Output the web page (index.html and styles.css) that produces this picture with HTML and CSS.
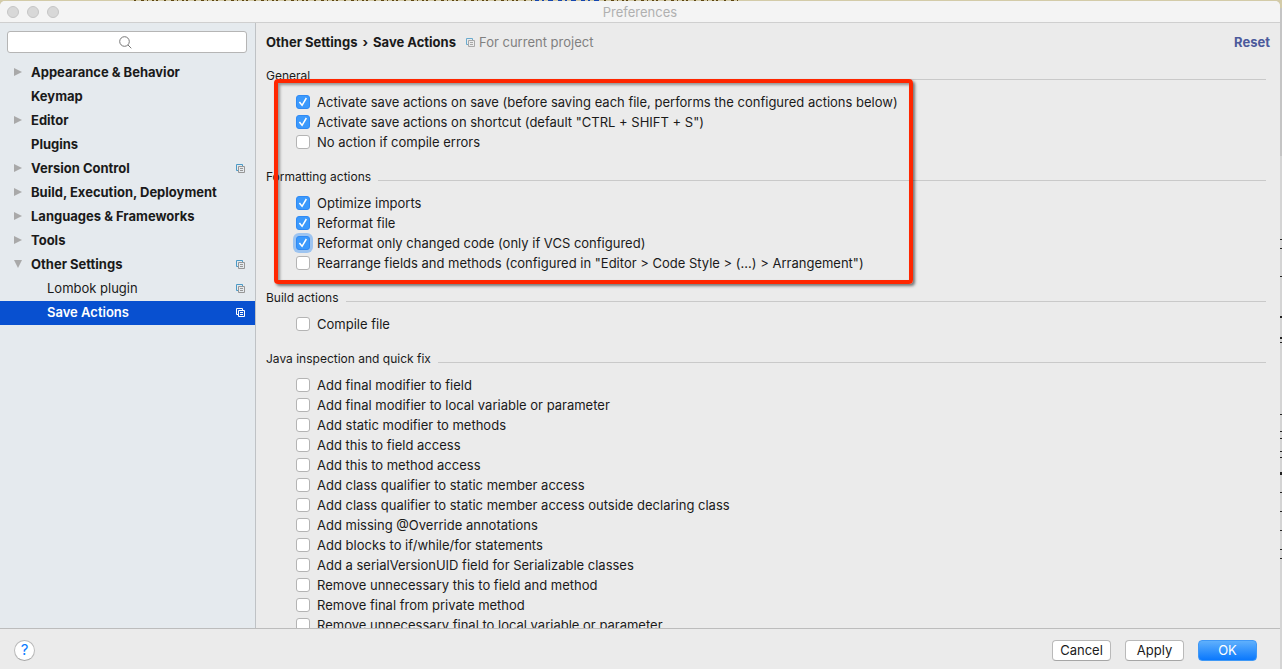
FILE: index.html
```html
<!DOCTYPE html>
<html lang="en">
<head>
<meta charset="utf-8">
<title>Preferences</title>
<link rel="stylesheet" href="styles.css">
</head>
<body>
<svg class="defs" aria-hidden="true">
  <symbol id="copy" viewBox="0 0 9 9">
    <path class="copy-back" d="M2 6.500H.5V.5H6.500V2" fill="none"/>
    <path class="copy-front" d="M2.500 2.500H8.500V8.500H2.500ZM4 4.500H7M4 6.500H7" fill="none"/>
  </symbol>
</svg>
<div class="window">
  <header class="titlebar">
    <div class="lights"><span></span><span></span><span></span></div>
    <h1>Preferences</h1>
  </header>
  <div class="body">
    <aside class="sidebar">
      <label class="search">
        <input type="search" aria-label="Search settings">
        <svg viewBox="0 0 13 13" aria-hidden="true"><circle cx="5.500" cy="5.500" r="4.800"/><path d="M9 9L12.300 12.300"/></svg>
      </label>
      <nav class="tree">
        <a href="#" class="node closed">Appearance &amp; Behavior</a>
        <a href="#" class="node">Keymap</a>
        <a href="#" class="node closed">Editor</a>
        <a href="#" class="node">Plugins</a>
        <a href="#" class="node closed">Version Control<svg class="copy"><use href="#copy"/></svg></a>
        <a href="#" class="node closed">Build, Execution, Deployment</a>
        <a href="#" class="node closed">Languages &amp; Frameworks</a>
        <a href="#" class="node closed">Tools</a>
        <a href="#" class="node open">Other Settings<svg class="copy"><use href="#copy"/></svg></a>
        <a href="#" class="node child">Lombok plugin<svg class="copy"><use href="#copy"/></svg></a>
        <a href="#" class="node child selected" aria-current="page">Save Actions<svg class="copy"><use href="#copy"/></svg></a>
      </nav>
    </aside>
    <main class="content">
      <div class="crumbs">
        <h2><span>Other Settings</span><span>›</span><span>Save Actions</span></h2>
        <svg class="copy"><use href="#copy"/></svg>
        <span class="scope">For current project</span>
        <a href="#" class="reset">Reset</a>
      </div>
      <fieldset>
        <legend><span>General</span></legend>
        <label><input type="checkbox" checked>Activate save actions on save (before saving each file, performs the configured actions below)</label>
        <label><input type="checkbox" checked>Activate save actions on shortcut (default "CTRL + SHIFT + S")</label>
        <label><input type="checkbox">No action if compile errors</label>
      </fieldset>
      <fieldset>
        <legend><span>Formatting actions</span></legend>
        <label><input type="checkbox" checked>Optimize imports</label>
        <label><input type="checkbox" checked>Reformat file</label>
        <label><input type="checkbox" class="focused" checked>Reformat only changed code (only if VCS configured)</label>
        <label><input type="checkbox">Rearrange fields and methods (configured in "Editor &gt; Code Style &gt; (...) &gt; Arrangement")</label>
      </fieldset>
      <fieldset>
        <legend><span>Build actions</span></legend>
        <label><input type="checkbox">Compile file</label>
      </fieldset>
      <fieldset>
        <legend><span>Java inspection and quick fix</span></legend>
        <label><input type="checkbox">Add final modifier to field</label>
        <label><input type="checkbox">Add final modifier to local variable or parameter</label>
        <label><input type="checkbox">Add static modifier to methods</label>
        <label><input type="checkbox">Add this to field access</label>
        <label><input type="checkbox">Add this to method access</label>
        <label><input type="checkbox">Add class qualifier to static member access</label>
        <label><input type="checkbox">Add class qualifier to static member access outside declaring class</label>
        <label><input type="checkbox">Add missing @Override annotations</label>
        <label><input type="checkbox">Add blocks to if/while/for statements</label>
        <label><input type="checkbox">Add a serialVersionUID field for Serializable classes</label>
        <label><input type="checkbox">Remove unnecessary this to field and method</label>
        <label><input type="checkbox">Remove final from private method</label>
        <label><input type="checkbox">Remove unnecessary final to local variable or parameter</label>
      </fieldset>
      <div class="highlight"></div>
    </main>
  </div>
  <footer class="footer">
    <button class="help" type="button" aria-label="Help">?</button>
    <button type="button">Cancel</button>
    <button type="button">Apply</button>
    <button type="button" class="primary">OK</button>
  </footer>
</div>
<svg class="behind" aria-hidden="true">
  <path stroke="#5c4410" stroke-dasharray="2 5 3 3 1 4 2 2 2 6" d="M134 .5H532M604 .5H742"/>
  <path stroke="#1546b0" stroke-dasharray="4 3 2 4 5 5" d="M535 .5H601"/>
  <path stroke="#222" stroke-width="2" stroke-dasharray="1 8 1 27 1 39 2 19 2 3 1 71 1 16 1 6 1 12 1 5 1 14 3 17 1 18 1 18 1 18" d="M1281 239V560"/>
</svg>
</body>
</html>
```

FILE: styles.css
```css
* { box-sizing: border-box; }
body {
  margin: 0;
  height: 100vh;
  padding: 1px 2px 0 0;
  overflow: hidden;
  background: linear-gradient(#d3cba8 0 8px, #c4c4c4 8px 156px, #d4d4d4 156px);
  font: 13px/20px Inter, "Liberation Sans", sans-serif;
  color: #1a1a1a;
}
.defs { position: absolute; width: 0; height: 0; }
.behind { position: absolute; inset: 0; z-index: -1; width: 100%; height: 100%; fill: none; }
.window {
  height: 100%;
  display: flex;
  flex-direction: column;
  border-radius: 5px 5px 0 0;
  overflow: hidden;
  background: #ebebeb;
}
.titlebar {
  flex: none;
  height: 22px;
  display: grid;
  grid-template-columns: 1fr auto 1fr;
  align-items: center;
  padding: 0 7px;
  background: #f4f4f4;
  border-bottom: 1px solid #cfcfcf;
}
.titlebar h1 { margin: 0; font-size: 13px; font-weight: 400; color: #b0b0b0; }
.lights { display: flex; gap: 8px; }
.lights span { width: 12px; height: 12px; border-radius: 50%; background: #d8d8d8; border: 1px solid #c5c5c5; }
.body { flex: 1; min-height: 0; display: flex; }
.sidebar { flex: none; width: 256px; background: #e5eaee; border-right: 1px solid #bfc2c5; }
.search { display: grid; place-items: center; margin: 8px 8px 8px 7px; }
.search > * { grid-area: 1 / 1; }
.search input { width: 100%; height: 22px; border: 1px solid #b5b5b5; border-radius: 3px; background: #fff; padding: 0 6px; font: inherit; }
.search svg { width: 13px; height: 13px; margin-right: 4px; fill: none; stroke: #767676; stroke-width: 1; }
.tree { display: flex; flex-direction: column; }
.node {
  display: flex;
  align-items: center;
  height: 24px;
  padding: 0 10px 2px 14px;
  color: #1a1a1a;
  font-weight: 700;
  text-decoration: none;
}
.node::before { content: ""; flex: none; width: 8px; height: 8px; margin-right: 9px; }
.closed::before { background: #a9a9a9; clip-path: polygon(0 0, 100% 50%, 0 100%); }
.open::before { background: #a9a9a9; clip-path: polygon(0 0, 100% 0, 50% 100%); }
.child { font-weight: 400; padding-left: 30px; }
.selected { background: #0850d0; color: #fff; font-weight: 600; }
.copy { flex: none; width: 9px; height: 9px; --back: #4b9ac6; --front: #979797; }
.copy-back { stroke: var(--back); }
.copy-front { stroke: var(--front); }
.node .copy { margin-left: auto; }
.selected .copy { --back: #fff; --front: #fff; }
.content { position: relative; flex: 1; min-width: 0; overflow: hidden; padding: 9px 10px 0; }
.crumbs { display: flex; align-items: center; height: 20px; margin-bottom: 15px; }
.crumbs h2 { display: flex; gap: 5px; margin: 0 10px 0 0; font-size: 13px; font-weight: 700; color: #1a1a1a; }
.crumbs .copy { opacity: .8; }
.scope { margin-left: 4px; color: #808080; }
.reset { margin-left: auto; color: #4b5a9b; font-weight: 700; text-decoration: none; }
fieldset { display: flex; flex-direction: column; min-width: 0; margin: 0 4px 16px 0; padding: 7px 0 0 30px; border: 0; }
legend { display: flex; align-items: center; width: calc(100% + 30px); margin-left: -30px; padding: 0; font-size: 12px; line-height: 18px; }
legend::after { content: ""; flex: 1; height: 1px; margin: 7px 0 0 7px; background: #c9c9c9; }
fieldset label { display: flex; align-items: center; height: 20px; white-space: nowrap; }
input[type="checkbox"] {
  appearance: none;
  flex: none;
  width: 14px;
  height: 14px;
  margin: 0 7px 0 0;
  border: 1px solid #b4b4b4;
  border-radius: 3px;
  background: #fff;
}
input[type="checkbox"]:checked {
  display: grid;
  place-items: center;
  border-color: #2f8af5;
  background: #3b99fc;
}
input[type="checkbox"]:checked::before {
  content: "";
  width: 10px;
  height: 10px;
  background: #fff;
  clip-path: polygon(8% 56%, 20% 46%, 40% 70%, 77% 6%, 90% 14%, 42% 94%);
}
input[type="checkbox"].focused { box-shadow: 0 0 0 3px #9dc4f0; }
.highlight {
  position: absolute;
  left: 18px;
  top: 56px;
  width: 639px;
  height: 205px;
  border: 4px solid #ff2600;
  border-radius: 4px;
  box-shadow: 2px 2px 3px #00000080, inset 2px 2px 3px #00000060;
  pointer-events: none;
}
.footer {
  flex: none;
  display: flex;
  align-items: center;
  gap: 14px;
  height: 41px;
  padding: 2px 23px 0 14px;
  border-top: 1px solid #bcbcbc;
}
button {
  width: 59px;
  height: 21px;
  padding: 0;
  border: 1px solid #b9b9b9;
  border-bottom-color: #a6a6a6;
  border-radius: 4px;
  background: #fff;
  color: #1a1a1a;
  font: inherit;
  line-height: 18px;
}
.primary { background: linear-gradient(#5fb0fc, #0a78fd); border-color: #3f98f6; color: #fff; }
.help { width: 21px; border-radius: 50%; margin-right: auto; color: #0a7cff; font-size: 15px; }
```
